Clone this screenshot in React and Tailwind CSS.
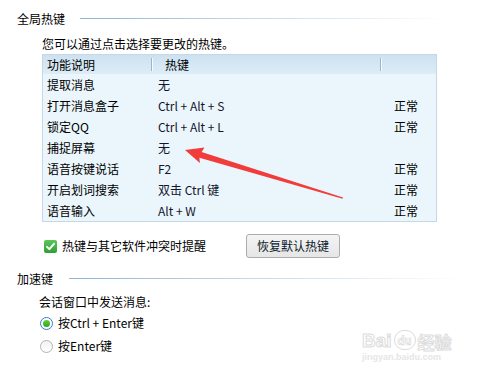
import React from 'react';

const rows = [
  { name: '提取消息', key: '无', status: '' },
  { name: '打开消息盒子', key: 'Ctrl + Alt + S', status: '正常' },
  { name: '锁定QQ', key: 'Ctrl + Alt + L', status: '正常' },
  { name: '捕捉屏幕', key: '无', status: '' },
  { name: '语音按键说话', key: 'F2', status: '正常' },
  { name: '开启划词搜索', key: '双击 Ctrl 键', status: '正常' },
  { name: '语音输入', key: 'Alt + W', status: '正常' },
];

const font = { fontFamily: '"Microsoft YaHei", "Noto Sans CJK SC", sans-serif' };

const App = () => {
  return (
    <div className="relative w-[478px] h-[374px] bg-white overflow-hidden text-[12px] text-black" style={font}>
      {/* 全局热键 */}
      <div className="pt-[11px]">
        <div className="flex items-center h-[15px]">
          <span className="ml-[17px] leading-[15px]">全局热键</span>
          <div className="ml-[15px] w-[367px] h-px bg-gradient-to-r from-[#8db3d4] via-[#c8dbeb] to-white" />
        </div>
      </div>

      <div className="ml-[42px] mt-[10px] h-[16px] leading-[16px]">您可以通过点击选择要更改的热键。</div>

      {/* Hotkey table */}
      <div className="ml-[42px] mt-[2px] w-[395px] border border-[#c3d8e8] bg-[#eaf6fb]">
        <div className="grid grid-cols-[108px_229px_1fr] h-[19px] bg-gradient-to-b from-[#cde1f0] to-[#dcedf7]">
          <div className="flex items-center pl-[4px] leading-none">功能说明</div>
          <div className="relative flex items-center pl-[14px] leading-none">
            <span className="absolute left-0 top-[3px] h-[13px] w-px bg-[#9ab6cc]" />
            <span className="absolute left-px top-[3px] h-[13px] w-px bg-white/80" />
            热键
          </div>
          <div className="relative">
            <span className="absolute left-0 top-[3px] h-[13px] w-px bg-[#9ab6cc]" />
            <span className="absolute left-px top-[3px] h-[13px] w-px bg-white/80" />
          </div>
        </div>
        {rows.map((r) => (
          <div key={r.name} className="grid grid-cols-[108px_229px_1fr] h-[21px] items-center">
            <div className="pl-[4px] leading-none">{r.name}</div>
            <div className="pl-[7px] leading-none text-[#14142e]">{r.key}</div>
            <div className="pl-[14px] leading-none">{r.status}</div>
          </div>
        ))}
      </div>

      {/* checkbox + reset button */}
      <div className="flex items-center ml-[44px] mt-[12px] h-[24px]">
        <div className="flex items-center w-[202px]">
          <span className="flex items-center justify-center w-[13px] h-[13px] rounded-[2px] bg-gradient-to-b from-[#5cc65c] to-[#2f9f35]">
            <svg width="11" height="11" viewBox="0 0 11 11">
              <path d="M2 5.8 L4.4 8.2 L9 2.8" fill="none" stroke="white" strokeWidth="1.9" strokeLinecap="round" strokeLinejoin="round" />
            </svg>
          </span>
          <span className="ml-[5px] leading-none">热键与其它软件冲突时提醒</span>
        </div>
        <button className="w-[94px] h-[24px] rounded-[3px] border border-[#acacac] bg-gradient-to-b from-[#f4f4f4] to-[#e6e6e6] text-[12px] text-[#0b1b2b] leading-none">
          恢复默认热键
        </button>
      </div>

      {/* 加速键 */}
      <div className="flex items-center h-[15px] mt-[13px]">
        <span className="ml-[17px] leading-[15px]">加速键</span>
        <div className="ml-[16px] w-[392px] h-px bg-gradient-to-r from-[#8db3d4] via-[#c8dbeb] to-white" />
      </div>

      <div className="ml-[39px] mt-[8px] h-[16px] leading-[16px]">会话窗口中发送消息:</div>

      <div className="flex items-center ml-[40px] mt-[5px] h-[16px]">
        <span className="flex items-center justify-center w-[13px] h-[13px] rounded-full border border-[#3a7cc0] bg-white">
          <span className="w-[7px] h-[7px] rounded-full bg-gradient-to-b from-[#5fd03c] to-[#2ea51e]" />
        </span>
        <span className="ml-[5px] leading-none">按Ctrl + Enter键</span>
      </div>

      <div className="flex items-center ml-[40px] mt-[7px] h-[16px]">
        <span className="w-[13px] h-[13px] rounded-full border border-[#b4b4b4] bg-gradient-to-b from-[#f2f2f2] to-white" />
        <span className="ml-[5px] leading-none">按Enter键</span>
      </div>

      {/* watermark */}
      <div className="absolute left-[362px] top-[330px] flex flex-col items-start select-none">
        <div className="flex items-end leading-none">
          <span className="text-[19px] font-bold text-white [-webkit-text-stroke:1px_#dcdcdc]" style={{ fontFamily: '"Liberation Sans", sans-serif' }}>Bai</span>
          <span className="relative ml-[2px] flex items-center justify-center w-[22px] h-[20px] rounded-[10px] border border-[#dcdcdc] text-[11px] font-bold text-white [-webkit-text-stroke:0.6px_#d4d4d4]">
            du
          </span>
          <span className="ml-[2px] text-[17px] font-bold text-white [-webkit-text-stroke:1px_#dcdcdc]">经验</span>
        </div>
        <span className="mt-[3px] text-[9px] leading-none text-[#e6e6e6] font-bold" style={{ fontFamily: '"Liberation Sans", sans-serif' }}>jingyan.baidu.com</span>
      </div>

      {/* red arrow annotation */}
      <svg className="absolute left-0 top-0 pointer-events-none" width="478" height="374">
        <polygon
          points="185,150 204.5,147.5 201.6,152 343,197.4 342.6,198.8 199.4,157.8 199.9,163"
          fill="#f23b3b"
        />
      </svg>
    </div>
  );
};

export default App;
